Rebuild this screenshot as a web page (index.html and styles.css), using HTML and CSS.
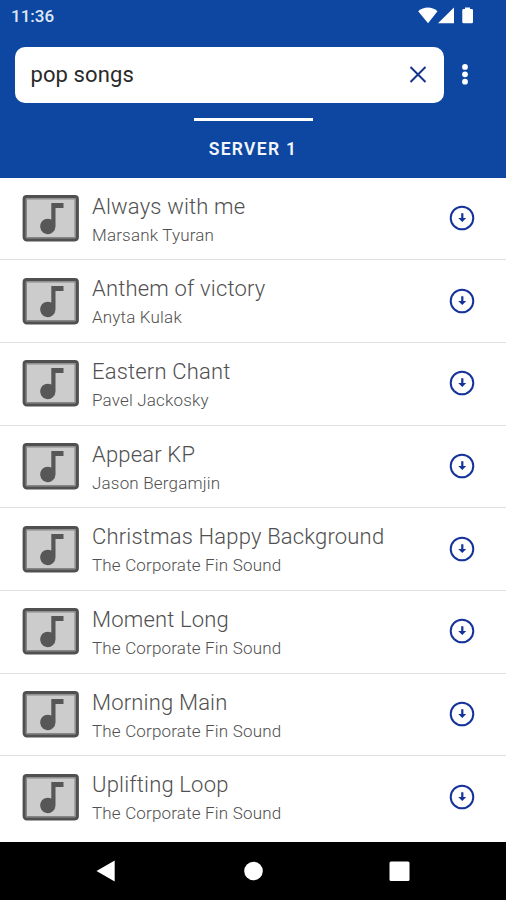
FILE: index.html
```html
<!DOCTYPE html>
<html lang="en">
<head>
<meta charset="utf-8">
<title>Music search</title>
<link rel="stylesheet" href="styles.css">
</head>
<body>
<svg class="sprite" aria-hidden="true">
  <symbol id="cover" viewBox="0 0 57 47">
    <rect x="2.200" y="1.7" width="53.1" height="43.1" rx="2.5" fill="#ccc" stroke="#505050" stroke-width="3.2"/>
    <rect x="4.400" y="3.900" width="48.700" height="38.700" fill="none" stroke="#858585" stroke-width="1.2"/>
    <path d="M29.300 8H41.500v5H33.500V31.500a7.700 7.700 0 1 1-4.200-6.900z" fill="#575757"/>
  </symbol>
  <symbol id="download" viewBox="0 0 26 26">
    <circle cx="13" cy="13" r="11.300" fill="none" stroke="#15329b" stroke-width="2"/>
    <path d="M12.200 8.300h2.200v4.600h2.800L13.300 17 9.200 12.900h3z" fill="#15329b"/>
  </symbol>
</svg>
<div class="screen">
  <header class="header">
    <div class="status">
      <span class="clock">11:36</span>
      <svg class="indicators" width="56" height="18" viewBox="0 0 56 18" fill="#fff">
        <path d="M-.8 4.200C4.700-.6 13-.6 18.500 4.200L9 16.300z"/>
        <path d="M19 16.300 35 .5v15.800z"/>
        <path d="M46 2V.4h5V2h1.700q1.300 0 1.300 1.300v11.700q0 1.300-1.300 1.300h-8.100q-1.300 0-1.300-1.300V3.300q0-1.300 1.300-1.300z"/>
      </svg>
    </div>
    <div class="toolbar">
      <div class="search">
        <span>pop songs</span>
        <svg width="18" height="18" viewBox="0 0 18 18"><path d="M1.500 1l15 15m0-15l-15 15" fill="none" stroke="#16348c" stroke-width="2"/></svg>
      </div>
      <svg class="more" width="8" height="22" viewBox="0 0 8 22" fill="#fff"><circle cx="4" cy="2.900" r="2.900"/><circle cx="4" cy="10.300" r="2.900"/><circle cx="4" cy="17.700" r="2.900"/></svg>
    </div>
    <div class="tab">SERVER 1</div>
  </header>
  <main class="songs">
    <article class="song"><svg class="cover"><use href="#cover"/></svg><div class="info"><h2>Always with me</h2><p>Marsank Tyuran</p></div><svg class="download"><use href="#download"/></svg></article>
    <article class="song"><svg class="cover"><use href="#cover"/></svg><div class="info"><h2>Anthem of victory</h2><p>Anyta Kulak</p></div><svg class="download"><use href="#download"/></svg></article>
    <article class="song"><svg class="cover"><use href="#cover"/></svg><div class="info"><h2>Eastern Chant</h2><p>Pavel Jackosky</p></div><svg class="download"><use href="#download"/></svg></article>
    <article class="song"><svg class="cover"><use href="#cover"/></svg><div class="info"><h2>Appear KP</h2><p>Jason Bergamjin</p></div><svg class="download"><use href="#download"/></svg></article>
    <article class="song"><svg class="cover"><use href="#cover"/></svg><div class="info"><h2>Christmas Happy Background</h2><p>The Corporate Fin Sound</p></div><svg class="download"><use href="#download"/></svg></article>
    <article class="song"><svg class="cover"><use href="#cover"/></svg><div class="info"><h2>Moment Long</h2><p>The Corporate Fin Sound</p></div><svg class="download"><use href="#download"/></svg></article>
    <article class="song"><svg class="cover"><use href="#cover"/></svg><div class="info"><h2>Morning Main</h2><p>The Corporate Fin Sound</p></div><svg class="download"><use href="#download"/></svg></article>
    <article class="song"><svg class="cover"><use href="#cover"/></svg><div class="info"><h2>Uplifting Loop</h2><p>The Corporate Fin Sound</p></div><svg class="download"><use href="#download"/></svg></article>
  </main>
  <nav class="navbar">
    <svg width="20" height="24" viewBox="0 0 20 24"><path d="M.5 12 18.700 1.500v21z" fill="#fff"/></svg>
    <svg width="20" height="24" viewBox="0 0 20 24"><circle cx="10.500" cy="12" r="9.300" fill="#fff"/></svg>
    <svg width="20" height="24" viewBox="0 0 20 24"><rect x="-.5" y="2.500" width="20" height="19.500" rx="1.500" fill="#fff"/></svg>
  </nav>
</div>
</body>
</html>
```
FILE: styles.css
```css
* { box-sizing: border-box; }
body { margin: 0; font-family: Roboto, "Liberation Sans", sans-serif; background: #fff; }
svg { display: block; flex: none; overflow: visible; }
.sprite { display: none; }
.screen { width: 506px; height: 900px; display: flex; flex-direction: column; overflow: hidden; }
.header { height: 177.500px; flex: none; background: #0d47a1; color: #fff; display: flex; flex-direction: column; }
.status { height: 46px; display: flex; justify-content: space-between; padding: 7px 31px 0 11px; }
.clock { margin-top: -1px; font-size: 17px; line-height: 20px; letter-spacing: 0; color: #dfe7f6; font-weight: 500; }
.toolbar { height: 57px; display: flex; align-items: center; padding: 0 37px 0 14px; justify-content: space-between; }
.search { width: 429px; margin-left: .5px; height: 56px; border-radius: 10px; background: #fff; display: flex; align-items: center; justify-content: space-between; padding: 0 17px 0 16px; font-size: 22px; letter-spacing: .1px; color: #2a2a2a; }
.tab { align-self: center; width: 119px; margin-top: 15px; border-top: 3px solid #fff; padding-top: 16px; text-align: center; white-space: nowrap; font-size: 17.500px; line-height: 24px; font-weight: 600; letter-spacing: 1.300px; color: #f2f5fc; }
.songs { flex: none; }
.song { height: 82.700px; border-bottom: 1.500px solid #e0e0e0; display: flex; padding: 0 31px 0 22px; }
.song:last-child { height: 85.600px; border-bottom: 0; }
.cover { width: 57px; height: 47px; margin-top: 17.500px; }
.info { flex: 1; padding: 15px 0 0 13px; }
.info h2 { margin: 0; font-size: 22px; line-height: 28px; font-weight: 300; letter-spacing: .18px; color: #505050; }
.info p { margin: 3px 0 0; font-size: 17px; line-height: 22px; font-weight: 300; letter-spacing: .18px; color: #505050; }
.download { width: 26px; height: 26px; margin: 27.500px 0 0; }
.navbar { flex: 1; background: #000; display: flex; justify-content: space-between; padding: 17px 96px 0; }
```
